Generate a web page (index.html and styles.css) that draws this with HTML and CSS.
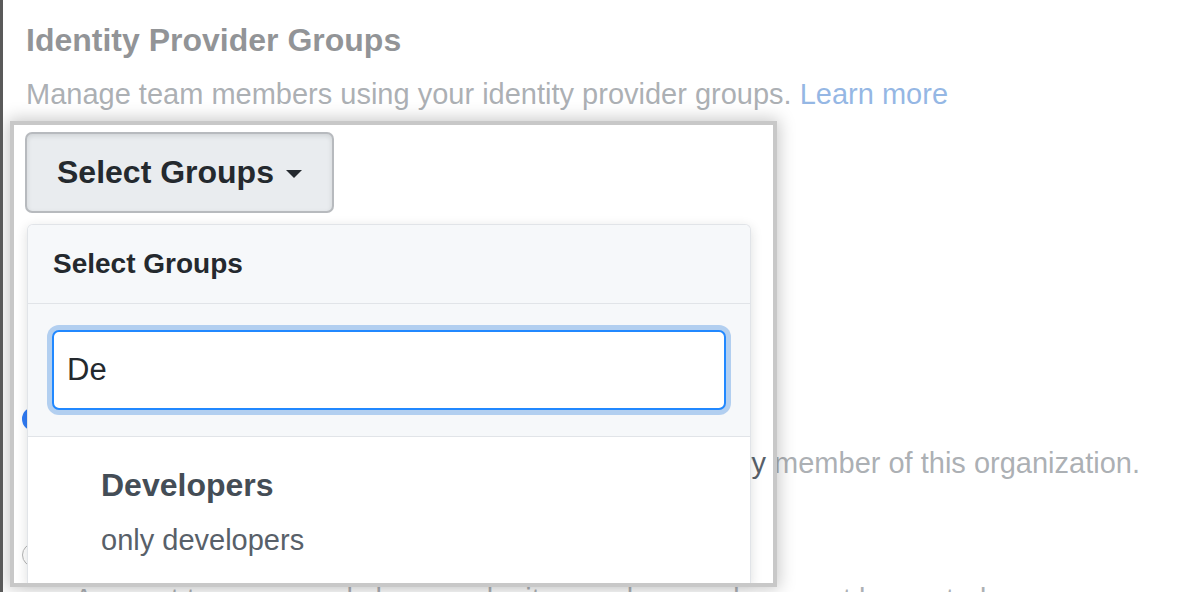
FILE: index.html
```html
<!DOCTYPE html>
<html lang="en">
<head>
<meta charset="utf-8">
<title>Identity Provider Groups</title>
<link rel="stylesheet" href="styles.css">
</head>
<body>
<main class="page">
  <h2 class="title">Identity Provider Groups</h2>
  <p class="desc">Manage team members using your identity provider groups. <a class="link" href="#">Learn more</a></p>

  <div class="select-menu">
    <button class="btn" type="button">Select Groups <span class="caret"></span></button>
    <div class="menu">
      <div class="menu-header">Select Groups</div>
      <div class="menu-filter">
        <input class="filter-input" type="text" value="De" aria-label="Filter groups">
      </div>
      <div class="menu-item">
        <div class="item-name">Developers</div>
        <div class="item-desc">only developers</div>
      </div>
    </div>
  </div>

  <div class="options">
    <div class="option">
      <div class="option-row"><span class="radio checked"></span><span class="option-label">Visible</span></div>
      <p class="note">A visible team can be seen and @mentioned by every member of this organization.</p>
    </div>
    <div class="option option-second">
      <div class="option-row"><span class="radio"></span><span class="option-label">Secret</span></div>
      <p class="note">A secret team can only be seen by its members and may not be nested.</p>
    </div>
  </div>

  <div class="spotlight"></div>
</main>
</body>
</html>
```

FILE: styles.css
```css
html, body {
  margin: 0;
  padding: 0;
}

body {
  width: 1188px;
  height: 592px;
  overflow: hidden;
  background: #ffffff;
  border-left: 3px solid #5a5a5a;
  box-sizing: border-box;
  font-family: "Liberation Sans", Arial, sans-serif;
  color: #24292e;
}

.page {
  position: relative;
  height: 592px;
  padding: 20px 0 0 23px;
  box-sizing: border-box;
}

.title {
  margin: 0;
  font-size: 32px;
  line-height: 40px;
  font-weight: 700;
  color: #24292e;
}

.desc {
  margin: 16px 0 0;
  font-size: 29px;
  line-height: 36px;
  color: #586069;
  white-space: nowrap;
}

.link {
  color: #2a6fc9;
  text-decoration: none;
}

.select-menu {
  position: relative;
  margin: 20px 0 0 -1px;
}

.btn {
  display: inline-flex;
  align-items: center;
  gap: 12px;
  height: 81px;
  padding: 0 30px;
  border: 2px solid rgba(27, 31, 35, 0.24);
  border-radius: 7px;
  background: #e9ecef;
  box-shadow: inset 0 2px 5px rgba(27, 31, 35, 0.12);
  font-family: inherit;
  font-size: 32px;
  font-weight: 700;
  color: #24292e;
  cursor: pointer;
}

.caret {
  width: 0;
  height: 0;
  border-top: 8px solid #24292e;
  border-left: 8px solid transparent;
  border-right: 8px solid transparent;
  margin-top: 2px;
}

.menu {
  position: absolute;
  top: 92px;
  left: 2px;
  z-index: 2;
  width: 724px;
  height: 360px;
  box-sizing: border-box;
  overflow: hidden;
  background: #ffffff;
  border: 1px solid #e1e4e8;
  border-bottom: none;
  border-radius: 6px 6px 0 0;
  box-shadow: 0 3px 12px rgba(27, 31, 35, 0.15);
}

.menu-header {
  display: flex;
  align-items: center;
  height: 78px;
  padding-left: 25px;
  background: #f6f8fa;
  border-bottom: 1px solid #e1e4e8;
  font-size: 28px;
  font-weight: 700;
  color: #24292e;
}

.menu-filter {
  padding: 26px 24px;
  background: #f6f8fa;
  border-bottom: 1px solid #e1e4e8;
}

.filter-input {
  display: block;
  width: 100%;
  height: 80px;
  box-sizing: border-box;
  margin: 0;
  padding: 0 13px;
  border: 2px solid #2188ff;
  border-radius: 7px;
  background: #ffffff;
  box-shadow: 0 0 0 5px rgba(3, 102, 214, 0.28);
  outline: none;
  font-family: inherit;
  font-size: 31px;
  color: #24292e;
}

.menu-item {
  padding: 30px 0 0 73px;
}

.item-name {
  font-size: 32px;
  line-height: 36px;
  font-weight: 700;
  color: #444d56;
}

.item-desc {
  margin-top: 19px;
  font-size: 29px;
  line-height: 36px;
  color: #586069;
}

.options {
  margin-top: 188px;
}

.option-second {
  margin-top: 56px;
}

.option-row {
  display: flex;
  align-items: center;
  height: 36px;
}

.radio {
  width: 24px;
  height: 24px;
  margin-left: -4px;
  box-sizing: border-box;
  border-radius: 50%;
  border: 1px solid #b4b4b4;
  background: #ffffff;
}

.radio.checked {
  border: 8px solid #2f7bf5;
  background: #ffffff;
}

.option-label {
  margin-left: 30px;
  font-size: 28px;
  font-weight: 700;
  color: #24292e;
}

.note {
  margin: 8px 0 0;
  padding-left: 48px;
  font-size: 29px;
  line-height: 36px;
  color: #586069;
  white-space: nowrap;
}

.spotlight {
  position: absolute;
  left: 7px;
  top: 121px;
  z-index: 5;
  width: 767px;
  height: 466px;
  box-sizing: border-box;
  border: 4px solid #c8c8c8;
  pointer-events: none;
  box-shadow: 0 0 16px 2px rgba(0, 0, 0, 0.22), 0 0 0 3000px rgba(255, 255, 255, 0.5);
}
```
